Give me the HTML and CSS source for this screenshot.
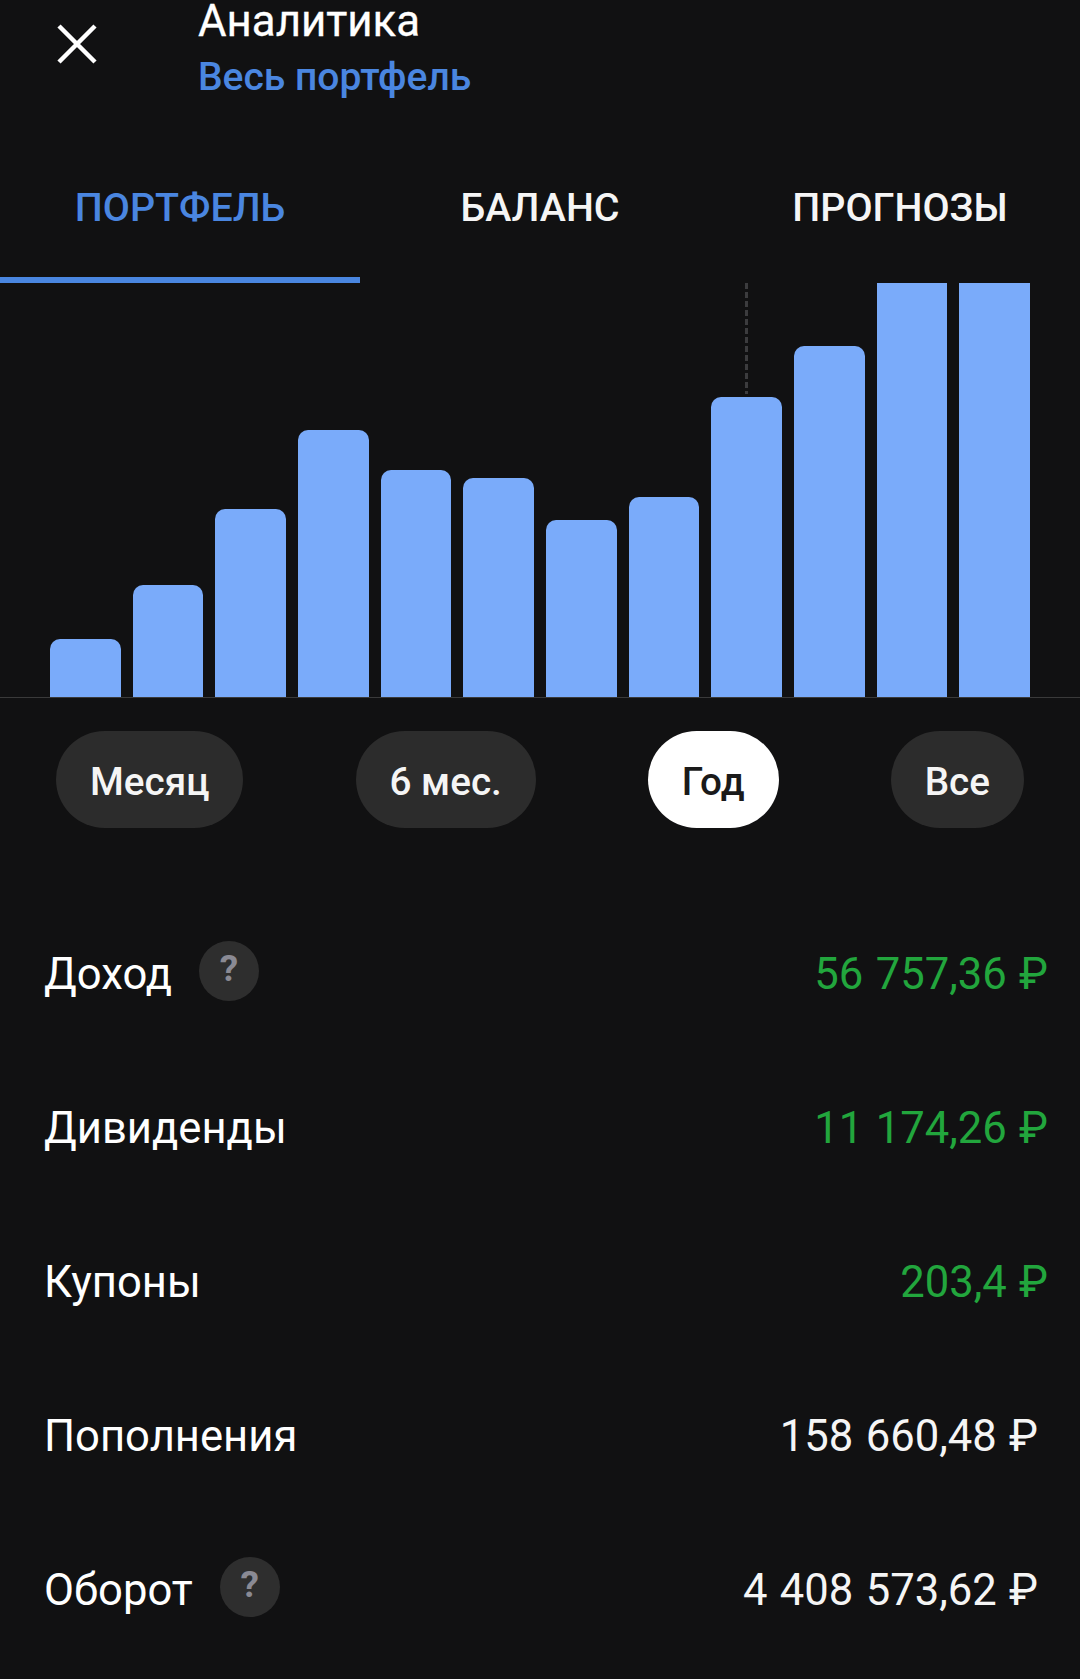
FILE: index.html
```html
<!DOCTYPE html>
<html lang="ru">
<head>
<meta charset="utf-8">
<title>Аналитика</title>
<link rel="stylesheet" href="styles.css">
</head>
<body>
<div class="page">
  <header class="header">
    <div class="close">
      <svg width="40" height="40" viewBox="0 0 40 40"><path d="M2 2 L38 38 M38 2 L2 38" stroke="#fff" stroke-width="4.5" fill="none"/></svg>
    </div>
    <div class="titles">
      <div class="title">Аналитика</div>
      <div class="subtitle">Весь портфель</div>
    </div>
  </header>
  <nav class="tabs">
    <div class="tab active">ПОРТФЕЛЬ</div>
    <div class="tab">БАЛАНС</div>
    <div class="tab">ПРОГНОЗЫ</div>
  </nav>
  <div class="chart">
    <div class="col"><div class="bar" style="height:58px"></div></div>
    <div class="col"><div class="bar" style="height:112px"></div></div>
    <div class="col"><div class="bar" style="height:188px"></div></div>
    <div class="col"><div class="bar" style="height:267px"></div></div>
    <div class="col"><div class="bar" style="height:227px"></div></div>
    <div class="col"><div class="bar" style="height:219px"></div></div>
    <div class="col"><div class="bar" style="height:177px"></div></div>
    <div class="col"><div class="bar" style="height:200px"></div></div>
    <div class="col"><div class="stem"></div><div class="bar" style="height:300px"></div></div>
    <div class="col"><div class="bar" style="height:351px"></div></div>
    <div class="col"><div class="bar full" style="height:414px"></div></div>
    <div class="col"><div class="bar full" style="height:414px"></div></div>
  </div>
  <div class="periods">
    <div class="pill">Месяц</div>
    <div class="pill">6 мес.</div>
    <div class="pill selected">Год</div>
    <div class="pill">Все</div>
  </div>
  <section class="rows">
    <div class="row"><div class="label">Доход<span class="help">?</span></div><div class="value green">56 757,36 ₽</div></div>
    <div class="row"><div class="label">Дивиденды</div><div class="value green">11 174,26 ₽</div></div>
    <div class="row"><div class="label">Купоны</div><div class="value green">203,4 ₽</div></div>
    <div class="row"><div class="label">Пополнения</div><div class="value">158 660,48 ₽</div></div>
    <div class="row"><div class="label">Оборот<span class="help">?</span></div><div class="value">4 408 573,62 ₽</div></div>
  </section>
</div>
</body>
</html>
```
FILE: styles.css
```css
* { box-sizing: border-box; }
html, body { margin: 0; padding: 0; }
body {
  background: #111112;
  color: #fff;
  font-family: Roboto, "Noto Sans", sans-serif;
  width: 1080px;
  height: 1679px;
  overflow: hidden;
}
.page { display: flex; flex-direction: column; }

.header {
  display: flex;
  height: 150px;
  padding-left: 57px;
}
.close { width: 141px; padding-top: 24px; }
.close svg { display: block; }
.title {
  font-size: 43.8px;
  line-height: 42px;
  -webkit-text-stroke: 0.3px #fff;
}
.subtitle {
  font-size: 39px;
  line-height: 44px;
  font-weight: 500;
  color: #4a86e0;
  margin-top: 13px;
}

.tabs { display: flex; height: 133px; }
.tab {
  flex: 1;
  text-align: center;
  font-size: 39.4px;
  font-weight: 500;
  line-height: 44px;
  padding-top: 36px;
  color: #f5f5f5;
}
.tab.active {
  color: #4a86e0;
  border-bottom: 6px solid #4a86e0;
}

.chart {
  display: grid;
  grid-template-columns: repeat(12, 1fr);
  column-gap: 12px;
  height: 415px;
  padding: 0 50px;
  border-bottom: 1px solid #3a3a3a;
}
.col { display: flex; flex-direction: column; justify-content: flex-end; align-items: stretch; }
.bar { background: #7aabfa; border-radius: 10px 10px 0 0; }
.bar.full { border-radius: 0; }
.stem {
  flex: 1;
  width: 3px;
  align-self: center;
  background: repeating-linear-gradient(to bottom, #3c3c3e 0 6px, transparent 6px 9px);
  margin-bottom: 3px;
}

.periods {
  display: flex;
  justify-content: space-between;
  padding: 33px 56px 0 56px;
}
.pill {
  height: 97px;
  padding: 0 34px;
  border-radius: 48.5px;
  background: #2c2c2c;
  font-size: 38.7px;
  font-weight: 500;
  line-height: 101px;
  color: #f5f5f5;
}
.pill.selected { background: #fff; color: #1a1a1a; }

.rows { display: flex; flex-direction: column; padding-top: 69px; }
.row {
  display: flex;
  justify-content: space-between;
  align-items: center;
  height: 154px;
  padding: 0 32px 0 44px;
  font-size: 43.6px;
  word-spacing: 1.5px;
}
.label { display: flex; align-items: center; }
.help {
  width: 60px;
  height: 60px;
  border-radius: 50%;
  margin-left: 27px;
  margin-top: -6px;
  background: #2e2e2e;
  color: #8a8a94;
  font-size: 37px;
  font-weight: 700;
  line-height: 56px;
  text-align: center;
}
.value { color: #f5f5f5; padding-right: 10px; }
.value.green { color: #22a63d; padding-right: 0; }
```
